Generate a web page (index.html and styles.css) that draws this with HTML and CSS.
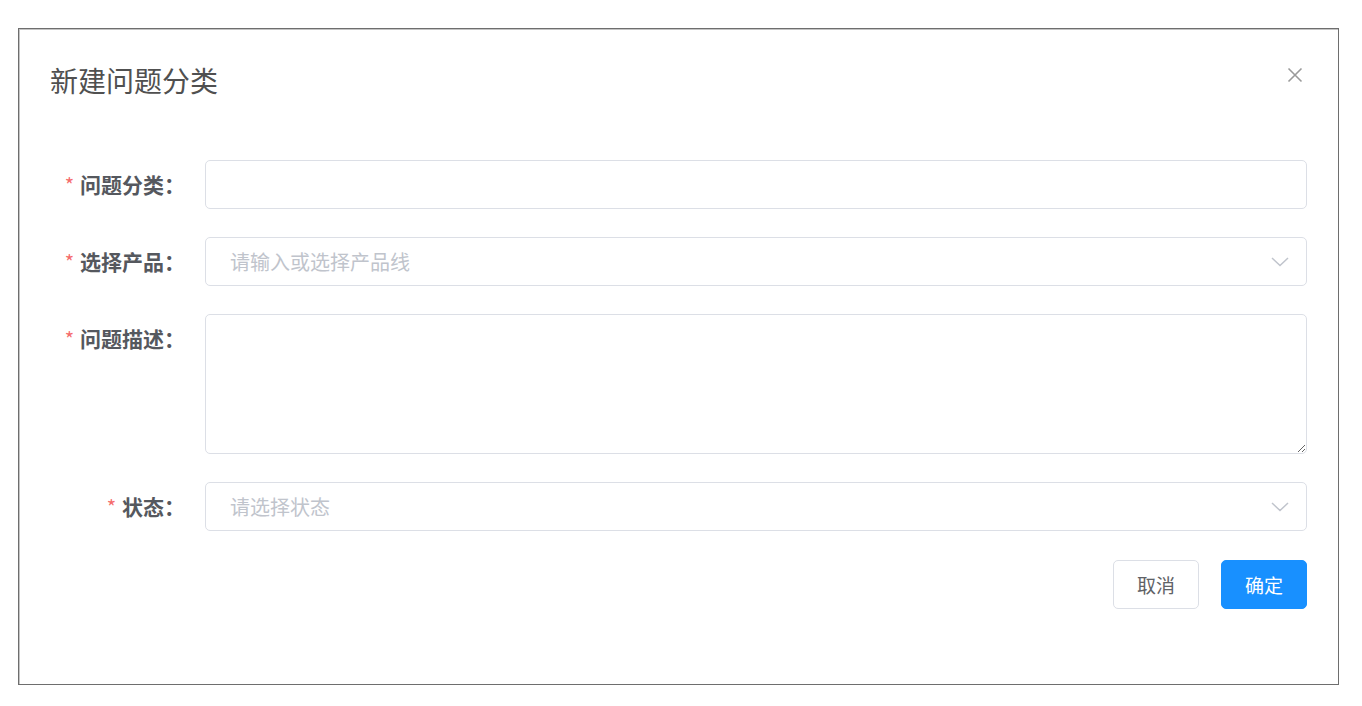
FILE: index.html
```html
<!DOCTYPE html>
<html lang="zh-CN">
<head>
    <meta charset="UTF-8">
    <meta name="viewport" content="width=device-width, initial-scale=1.0">
    <title>新建问题分类</title>
    <link rel="stylesheet" href="styles.css">
</head>
<body>

    <div class="dialog">
        <div class="dialog-header">
            <span class="dialog-title">新建问题分类</span>
            <button class="close-btn" type="button" aria-label="关闭">
                <svg width="16" height="16" viewBox="0 0 16 16">
                    <path d="M1.5 1.5L14.5 14.5M14.5 1.5L1.5 14.5" stroke="#9a9a9a" stroke-width="1.6" fill="none"/>
                </svg>
            </button>
        </div>

        <form class="form">
            <div class="form-item">
                <label class="form-label required" for="category">问题分类：</label>
                <div class="form-control">
                    <input type="text" id="category" class="input">
                </div>
            </div>
            <div class="form-item">
                <label class="form-label required" for="product">选择产品：</label>
                <div class="form-control select">
                    <input type="text" id="product" class="input" placeholder="请输入或选择产品线">
                    <svg class="arrow" width="18" height="10" viewBox="0 0 18 10">
                        <path d="M1 1L9 8.5L17 1" stroke="#c0c4cc" stroke-width="1.5" fill="none"/>
                    </svg>
                </div>
            </div>
            <div class="form-item">
                <label class="form-label required" for="desc">问题描述：</label>
                <div class="form-control">
                    <textarea id="desc" class="textarea"></textarea>
                </div>
            </div>
            <div class="form-item">
                <label class="form-label required" for="status">状态：</label>
                <div class="form-control select">
                    <input type="text" id="status" class="input" placeholder="请选择状态" readonly>
                    <svg class="arrow" width="18" height="10" viewBox="0 0 18 10">
                        <path d="M1 1L9 8.5L17 1" stroke="#c0c4cc" stroke-width="1.5" fill="none"/>
                    </svg>
                </div>
            </div>
            <div class="form-footer">
                <button type="button" class="btn">取消</button>
                <button type="button" class="btn btn-primary">确定</button>
            </div>
        </form>
    </div>

</body>
</html>
```

FILE: styles.css
```css
body {
    margin: 0;
    background-color: #fff;
    font-family: "Noto Sans CJK SC", "Noto Sans", Arial, sans-serif;
    color: #606266;
}
.dialog {
    box-sizing: border-box;
    width: 1321px;
    height: 657px;
    margin: 28px 0 0 18px;
    border: 1px solid #6e6e6e;
    box-shadow: inset 1px 1px 0 #c4c4c4;
    background-color: #fff;
    padding: 33px 31px 0 31px;
}
.dialog-header {
    display: flex;
    justify-content: space-between;
    align-items: flex-start;
}
.dialog-title {
    font-size: 28px;
    line-height: 36px;
    color: #505050;
}
.close-btn {
    background: none;
    border: none;
    padding: 0;
    margin: 5px 4px 0 0;
    width: 16px;
    height: 16px;
    cursor: pointer;
}
.close-btn svg {
    display: block;
}
.form {
    margin-top: 62px;
}
.form-item {
    display: flex;
    align-items: flex-start;
    margin-bottom: 28px;
}
.form-label {
    box-sizing: border-box;
    width: 155px;
    height: 49px;
    flex-shrink: 0;
    padding-right: 20px;
    text-align: right;
    font-size: 21px;
    line-height: 49px;
    font-weight: bold;
    color: #55585e;
    white-space: nowrap;
}
.form-label.required::before {
    content: "*";
    color: #f56c6c;
    font-weight: normal;
    font-size: 20px;
    margin-right: 6px;
}
.form-control {
    flex: 1;
    position: relative;
}
.input,
.textarea {
    box-sizing: border-box;
    display: block;
    width: 100%;
    border: 1px solid #dcdfe6;
    border-radius: 5px;
    background-color: #fff;
    font-family: inherit;
    font-size: 20px;
    color: #606266;
    outline: none;
}
.input {
    height: 49px;
    padding: 0 24px;
}
.textarea {
    height: 140px;
    padding: 8px 24px;
    resize: vertical;
}
.input::placeholder,
.textarea::placeholder {
    color: #c0c4cc;
}
.select .input {
    padding-right: 50px;
    cursor: pointer;
}
.arrow {
    position: absolute;
    right: 18px;
    top: 20px;
    pointer-events: none;
}
.form-footer {
    display: flex;
    justify-content: flex-end;
    gap: 22px;
    margin-top: 29px;
}
.btn {
    box-sizing: border-box;
    width: 86px;
    height: 49px;
    border: 1px solid #dcdfe6;
    border-radius: 5px;
    background-color: #fff;
    color: #606266;
    font-family: inherit;
    font-size: 19px;
    cursor: pointer;
}
.btn-primary {
    background-color: #1890ff;
    border-color: #1890ff;
    color: #fff;
}
.btn-primary:hover {
    background-color: #40a9ff;
}
```
